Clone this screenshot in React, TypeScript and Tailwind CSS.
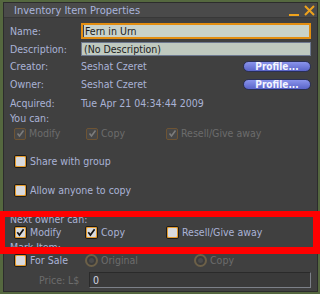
import React from "react";

const font = { fontFamily: '"DejaVu Sans Condensed", "DejaVu Sans", sans-serif', fontStretch: "condensed" as const };

function Check({ checked, disabled }: { checked?: boolean; disabled?: boolean }) {
  if (disabled) {
    return (
      <div className="w-[12px] h-[12px] shrink-0 rounded-[2px] border border-[#6e5434] bg-[#474747] flex items-center justify-center">
        {checked && (
          <svg width="9" height="9" viewBox="0 0 9 9">
            <path d="M1.5 4.5 L3.5 7 L7.5 1.5" stroke="#7c7c7c" strokeWidth="1.6" fill="none" />
          </svg>
        )}
      </div>
    );
  }
  return (
    <div className="w-[13px] h-[13px] shrink-0 rounded-[2px] border border-[#1a1a1a] bg-[#e39a2c] p-[1px]">
      <div className="w-full h-full rounded-[1px] bg-[#d9dadd] flex items-center justify-center">
        {checked && (
          <svg width="9" height="9" viewBox="0 0 9 9">
            <path d="M1.3 4.3 L3.4 7 L7.6 1.3" stroke="#111" strokeWidth="1.7" fill="none" />
          </svg>
        )}
      </div>
    </div>
  );
}

function Radio() {
  return (
    <div className="w-[13px] h-[13px] shrink-0 rounded-full border-2 border-[#6c6048] bg-[#3c3c3c] flex items-center justify-center">
      <div className="w-[5px] h-[5px] rounded-full bg-[#4c4c4c]" />
    </div>
  );
}

function ProfileBtn() {
  return (
    <div className="w-[68px] h-[11px] rounded-full border border-[#2a2f55] bg-gradient-to-b from-[#8a94ec] to-[#5a64c8] flex items-center justify-center text-[10px] leading-none font-bold text-[#f2f4ff]">
      Profile...
    </div>
  );
}

export default function App() {
  const label = "text-[#aab3d6]";
  const dim = "text-[#6c6c6c]";
  return (
    <div className="w-[320px] h-[294px] bg-[#55683f] relative overflow-hidden" style={font}>
      <div className="absolute left-[3px] top-[2px] w-[315px] h-[290px] bg-[#404040] border border-[#2c2c2c] flex flex-col text-[10.5px] leading-none">
        {/* title bar */}
        <div className="h-[15px] bg-[#4a4a4a] flex items-center pl-[10px] pr-[2px] shrink-0 border-b border-[#383838]">
          <span className="text-[11px] text-[#a9b4dc]">Inventory Item Properties</span>
          <div className="ml-auto flex items-center gap-[5px]">
            <div className="w-[10px] h-[2px] bg-[#eea21c] mt-[9px]" />
            <svg width="11" height="11" viewBox="0 0 11 11">
              <path d="M1 1 L10 10 M10 1 L1 10" stroke="#eea21c" strokeWidth="2" />
            </svg>
          </div>
        </div>
        {/* body */}
        <div className="flex flex-col pl-[6px] pr-[4px]">
          <div className="h-[5px]" />
          <div className="h-[16px] flex items-center">
            <span className={`w-[71px] shrink-0 ${label}`}>Name:</span>
            <div className="w-[230px] h-[16px] border-2 border-[#e38e10] bg-[#c9d2c9] flex items-center">
              <div className="w-[1px] h-full bg-[#34405a]" />
              <span className="pl-[1px] text-[10.5px] text-[#1c1c1c]">Fern in Urn</span>
            </div>
          </div>
          <div className="h-[3px]" />
          <div className="h-[14px] flex items-center">
            <span className={`w-[71px] shrink-0 ${label}`}>Description:</span>
            <div className="w-[230px] h-[14px] border border-[#6d7890] bg-[#bfc9bf] flex items-center">
              <span className="pl-[2px] text-[10.5px] text-[#1c1c1c]">(No Description)</span>
            </div>
          </div>
          <div className="h-[4px]" />
          <div className="h-[13px] flex items-center">
            <span className={`w-[71px] shrink-0 ${label}`}>Creator:</span>
            <span className={label}>Seshat Czeret</span>
            <div className="ml-auto mr-[2px]"><ProfileBtn /></div>
          </div>
          <div className="h-[5px]" />
          <div className="h-[13px] flex items-center">
            <span className={`w-[71px] shrink-0 ${label}`}>Owner:</span>
            <span className={label}>Seshat Czeret</span>
            <div className="ml-auto mr-[2px]"><ProfileBtn /></div>
          </div>
          <div className="h-[6px]" />
          <div className="h-[13px] flex items-center">
            <span className={`w-[71px] shrink-0 ${label}`}>Acquired:</span>
            <span className={label}>Tue Apr 21 04:34:44 2009</span>
          </div>
          <div className="h-[2px]" />
          <div className="h-[13px] flex items-center">
            <span className={label}>You can:</span>
          </div>
          <div className="h-[2px]" />
          <div className="h-[13px] flex items-center pl-[4px]">
            <div className="w-[72px] flex items-center gap-[3px]"><Check checked disabled /><span className={dim}>Modify</span></div>
            <div className="w-[80px] flex items-center gap-[3px]"><Check checked disabled /><span className={dim}>Copy</span></div>
            <div className="flex items-center gap-[3px]"><Check checked disabled /><span className={dim}>Resell/Give away</span></div>
          </div>
          <div className="h-[15px]" />
          <div className="h-[13px] flex items-center pl-[4px] gap-[3px]">
            <Check /><span className={label}>Share with group</span>
          </div>
          <div className="h-[16px]" />
          <div className="h-[13px] flex items-center pl-[4px] gap-[3px]">
            <Check /><span className={label}>Allow anyone to copy</span>
          </div>
          <div className="h-[17px]" />
          <div className="h-[11px] flex items-center">
            <span className={label}>Next owner can:</span>
          </div>
          <div className="h-[1px]" />
          <div className="h-[13px] flex items-center pl-[4px]">
            <div className="w-[71px] flex items-center gap-[3px]"><Check checked /><span className={label}>Modify</span></div>
            <div className="w-[81px] flex items-center gap-[3px]"><Check checked /><span className={label}>Copy</span></div>
            <div className="flex items-center gap-[3px]"><Check /><span className={label}>Resell/Give away</span></div>
          </div>
          <div className="h-[2px]" />
          <div className="h-[12px] flex items-center">
            <span className={label}>Mark Item:</span>
          </div>
          <div className="h-[1px]" />
          <div className="h-[13px] flex items-center pl-[4px]">
            <div className="w-[71px] flex items-center gap-[3px]"><Check /><span className={label}>For Sale</span></div>
            <div className="w-[109px] flex items-center gap-[3px]"><Radio /><span className={dim}>Original</span></div>
            <div className="flex items-center gap-[3px]"><Radio /><span className={dim}>Copy</span></div>
          </div>
          <div className="h-[5px]" />
          <div className="h-[16px] flex items-center">
            <span className={`ml-[29px] w-[29px] shrink-0 ${dim}`}>Price:</span>
            <span className={`w-[21px] shrink-0 ${dim}`}>L$</span>
            <div className="w-[222px] shrink-0 h-[16px] border border-[#7c8088] border-t-[#2a2a2a] border-l-[#2a2a2a] bg-[#3a3a3a] flex items-center">
              <span className="pl-[3px] text-[#d4d8e4]">0</span>
            </div>
          </div>
        </div>
      </div>
      {/* red annotation overlay */}
      <div className="absolute left-0 top-[211px] w-[320px] h-[43px] border-t-[6px] border-l-[5px] border-r-[7px] border-b-[7px] border-[#ff0000]" />
    </div>
  );
}
